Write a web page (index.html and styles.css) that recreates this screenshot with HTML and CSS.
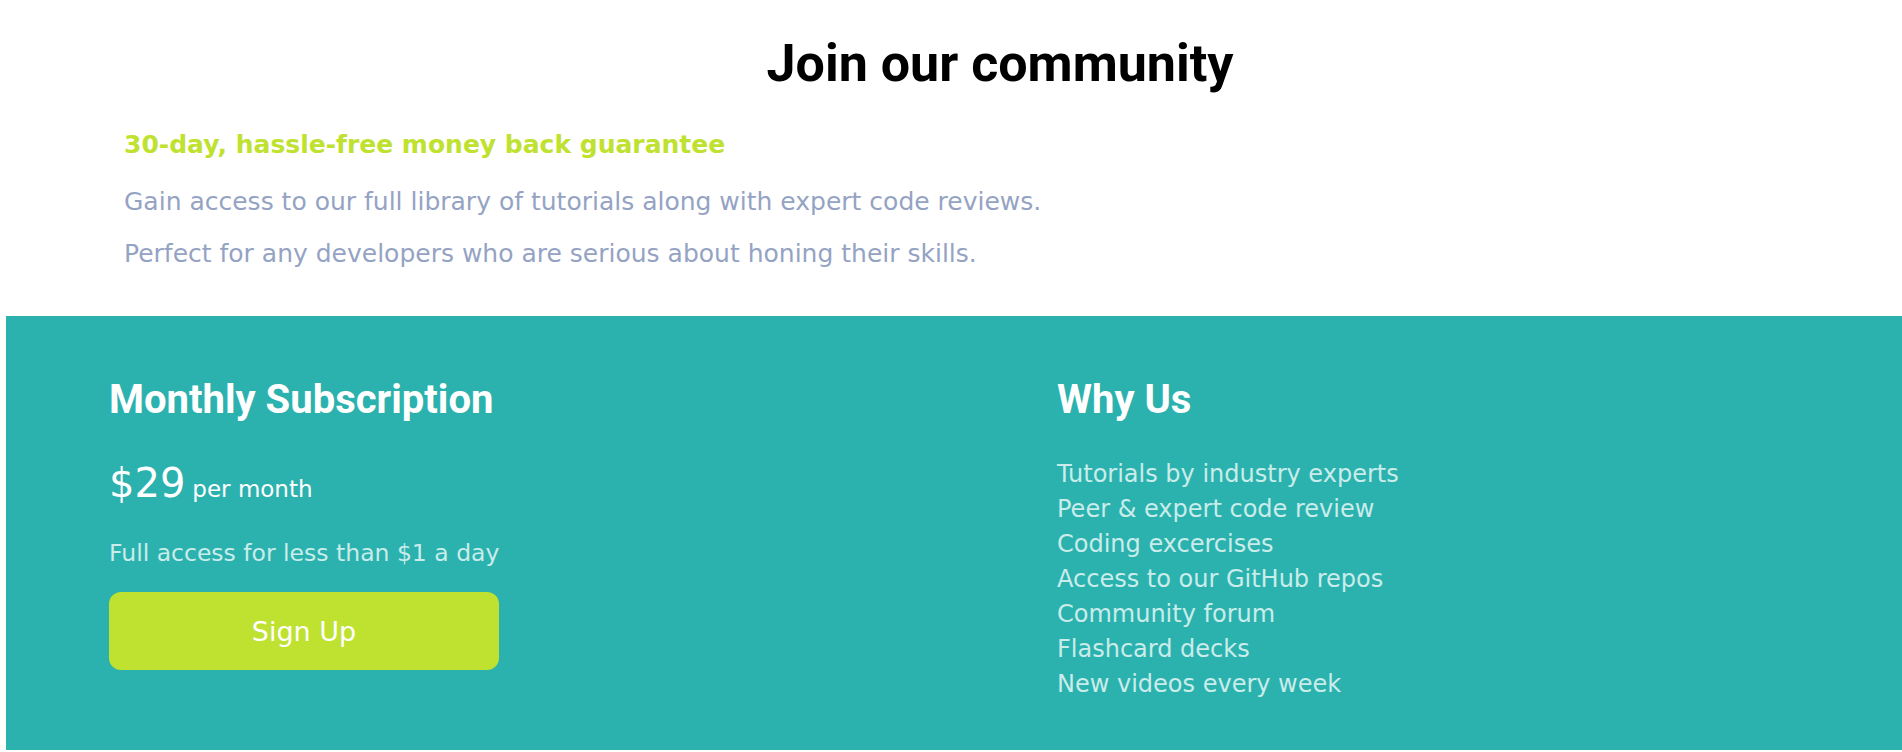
FILE: index.html
```html
<!DOCTYPE html>
<html lang="en">
<head>
<meta charset="utf-8">
<title>Join our community</title>
<link rel="stylesheet" href="styles.css">
</head>
<body>
<section class="intro">
  <h1 class="intro-title">Join our community</h1>
  <div class="intro-body">
    <h2 class="guarantee">30-day, hassle-free money back guarantee</h2>
    <p class="intro-text first">Gain access to our full library of tutorials along with expert code reviews.</p>
    <p class="intro-text">Perfect for any developers who are serious about honing their skills.</p>
  </div>
</section>
<section class="plans">
  <div class="plan-col">
    <h2 class="col-title">Monthly Subscription</h2>
    <div class="price"><span class="price-amount">$29</span><span class="price-unit">per month</span></div>
    <p class="price-note">Full access for less than $1 a day</p>
    <button class="signup">Sign Up</button>
  </div>
  <div class="plan-col">
    <h2 class="col-title">Why Us</h2>
    <ul class="why-list">
      <li>Tutorials by industry experts</li>
      <li>Peer &amp; expert code review</li>
      <li>Coding excercises</li>
      <li>Access to our GitHub repos</li>
      <li>Community forum</li>
      <li>Flashcard decks</li>
      <li>New videos every week</li>
    </ul>
  </div>
</section>
</body>
</html>
```
FILE: styles.css
```css
* { box-sizing: border-box; }
html, body { margin: 0; padding: 0; background: #fff; }
body {
  font-family: "DejaVu Sans", "Liberation Sans", sans-serif;
  overflow: hidden;
}
.intro {
  padding: 31px 0 0 98px;
  height: 316px;
}
.intro-title {
  margin: 0;
  text-align: center;
  font-family: Roboto, "DejaVu Sans", sans-serif;
  font-size: 52px;
  line-height: 66px;
  font-weight: bold;
  color: #000;
}
.intro-body { padding-left: 26px; }
.guarantee {
  margin: 33px 0 0;
  font-size: 25px;
  line-height: 30px;
  font-weight: bold;
  color: #bfe130;
}
.intro-text {
  margin: 22px 0 0;
  font-size: 25px;
  line-height: 30px;
  font-weight: normal;
  color: #95a3c3;
}
.intro-text.first { margin-top: 27px; }
.plans {
  margin-left: 6px;
  background: #2bb2ae;
  display: grid;
  grid-template-columns: 1fr 1fr;
  padding: 61px 0 48px;
  color: #fff;
}
.plan-col { padding-left: 103px; }
.col-title {
  margin: 0;
  font-family: Roboto, "DejaVu Sans", sans-serif;
  font-size: 40px;
  line-height: 46px;
  font-weight: bold;
  color: #fff;
}
.price {
  margin-top: 36px;
  font-size: 40px;
  line-height: 48px;
  color: #fff;
}
.price-amount { font-size: 40px; }
.price-unit { font-size: 23px; line-height: 1; margin-left: 7px; }
.price-note {
  margin: 31px 0 0;
  font-size: 23.5px;
  line-height: 30px;
  color: #caecea;
}
.signup {
  display: block;
  margin-top: 24px;
  width: 390px;
  height: 78px;
  border: 0;
  border-radius: 12px;
  background: #bfe130;
  color: #fff;
  font-family: inherit;
  font-size: 27px;
  cursor: pointer;
}
.why-list {
  list-style: none;
  margin: 34px 0 0;
  padding: 0;
}
.why-list li {
  font-size: 24px;
  line-height: 35px;
  color: #caecea;
}
```
